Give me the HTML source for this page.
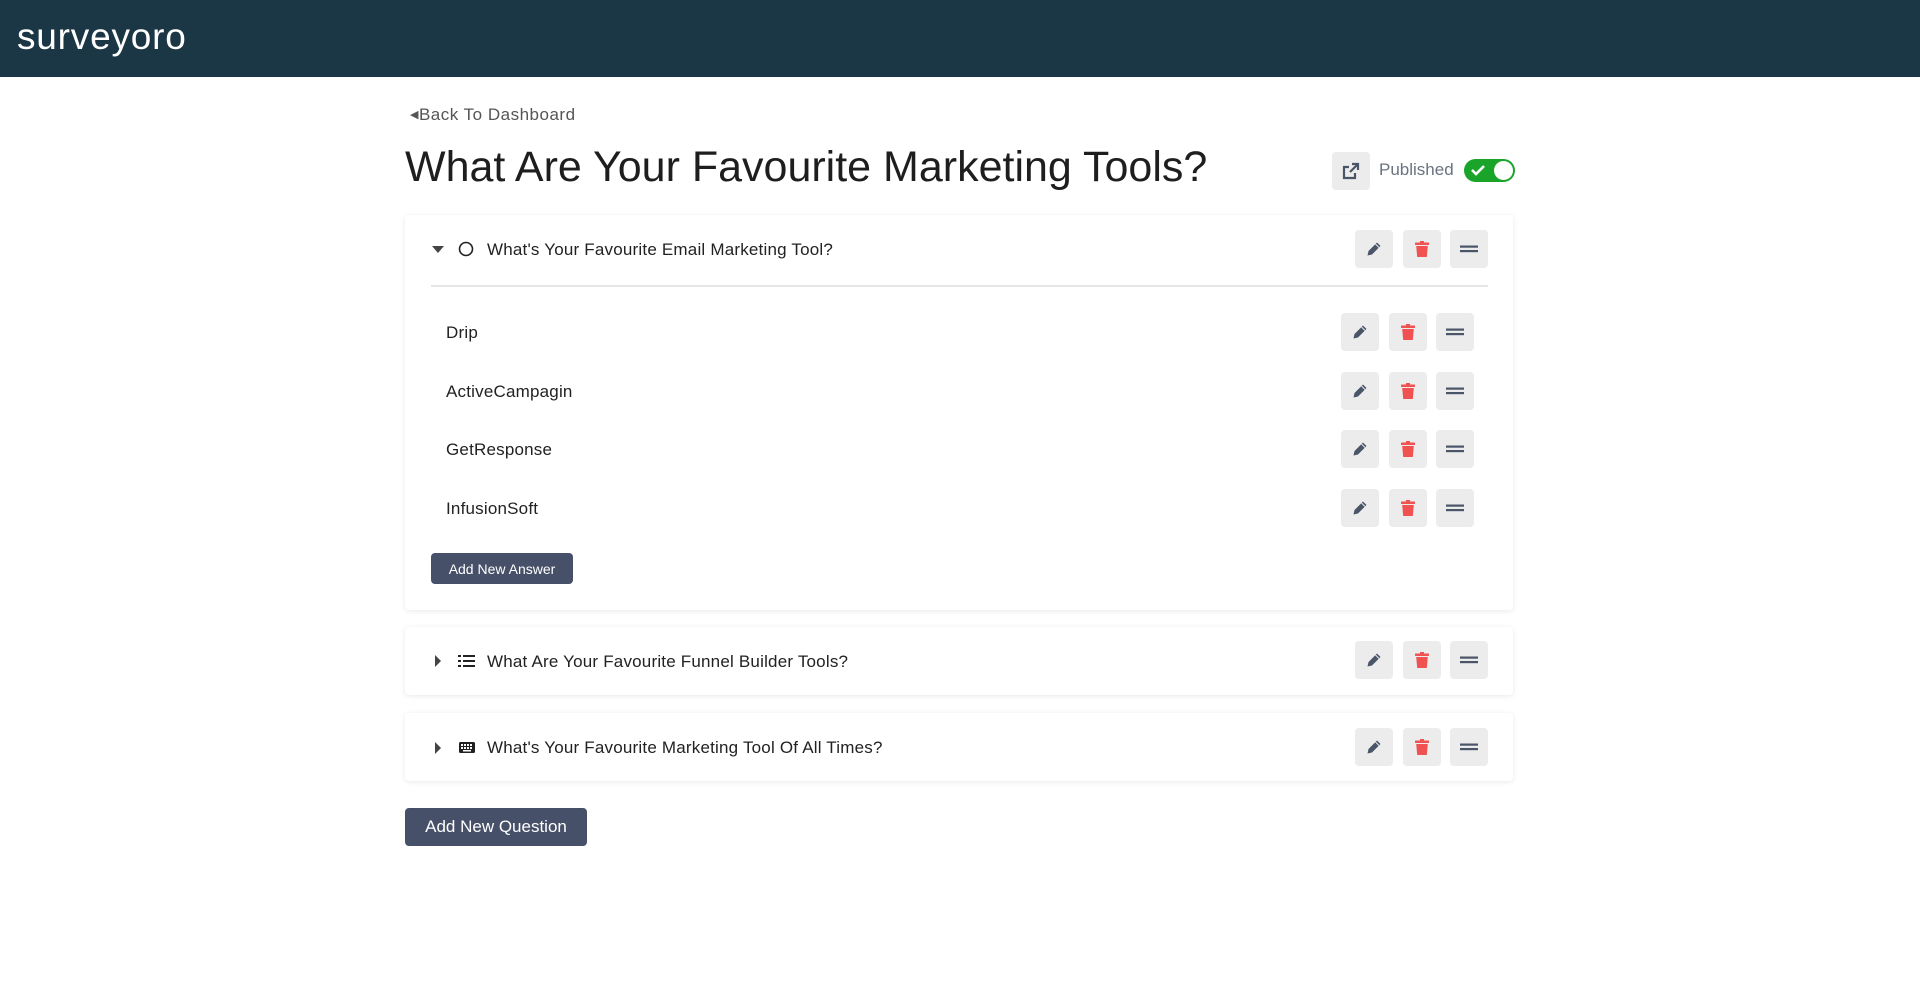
<!DOCTYPE html>
<html><head><meta charset="utf-8"><style>
*{box-sizing:border-box;margin:0;padding:0}
body{width:1920px;height:1007px;background:#fff;font-family:"Liberation Sans",sans-serif;color:#222;position:relative;overflow:hidden}
.hdr{position:absolute;left:0;top:0;width:1920px;height:77px;background:#1b3644}
.logo{position:absolute;left:17px;top:16px;color:#fff;font-size:37px;letter-spacing:0.8px}
.back{position:absolute;left:410px;top:105px;font-size:17px;color:#555;letter-spacing:0.5px}
.title{position:absolute;left:405px;top:143px;font-size:43px;color:#1e1e1e;letter-spacing:0px;white-space:nowrap}
.ext{position:absolute;left:1332px;top:152px;width:38px;height:38px;background:#ececec;border-radius:4px}
.pub{position:absolute;left:1379px;top:160px;font-size:17px;color:#6b7280}
.tog{position:absolute;left:1464px;top:159px;width:51px;height:23px;border-radius:12px;background:#1aa52a}
.tog .k{position:absolute;right:2px;top:2px;width:19px;height:19px;border-radius:50%;background:#fff}
.card{position:absolute;left:405px;width:1108px;background:#fff;border-radius:4px;box-shadow:0 1px 6px rgba(0,0,0,0.09)}
.row{position:absolute;font-size:17px;color:#222;white-space:nowrap;letter-spacing:0.2px}
.btn{position:absolute;width:38px;height:38px;background:#ececec;border-radius:4px;display:flex;align-items:center;justify-content:center}
.primary{position:absolute;background:#475069;color:#fff;border-radius:4px;display:flex;align-items:center;justify-content:center}
</style></head><body>
<div class="hdr"><div class="logo">surveyoro</div></div>
<div class="back"><span style="font-size:11px;position:relative;top:-2px">◀</span>Back To Dashboard</div>
<div class="title">What Are Your Favourite Marketing Tools?</div>
<div class="ext"><svg width="38" height="38" viewBox="0 0 38 38"><path d="M23 21v5h-11v-11h5" fill="none" stroke="#4b5568" stroke-width="2.2"/><path d="M18 20l8-8M20 12h6v6" fill="none" stroke="#4b5568" stroke-width="2.2"/></svg></div>
<div class="pub">Published</div>
<div class="tog"><svg style="position:absolute;left:7px;top:5px" width="14" height="12" viewBox="0 0 14 12"><path d="M1 6l4 4 8-8" fill="none" stroke="#fff" stroke-width="2.6"/></svg><div class="k"></div></div>

<div class="card" style="top:215px;height:395px"></div>
<div class="card" style="top:627px;height:68px"></div>
<div class="card" style="top:713px;height:68px"></div>

<svg style="position:absolute;left:432px;top:246px" width="12" height="8"><path d="M0 0h12L6 7z" fill="#444"/></svg>
<svg style="position:absolute;left:458px;top:241px" width="16" height="16"><circle cx="8" cy="8" r="6.5" fill="none" stroke="#222" stroke-width="1.6"/></svg>
<div class="row" style="left:487px;top:240px">What's Your Favourite Email Marketing Tool?</div>
<div style="position:absolute;left:431px;top:285px;width:1057px;height:2px;background:#e6e6e6"></div>

<div class="row" style="left:446px;top:323px">Drip</div>
<div class="row" style="left:446px;top:382px">ActiveCampagin</div>
<div class="row" style="left:446px;top:440px">GetResponse</div>
<div class="row" style="left:446px;top:499px">InfusionSoft</div>

<div class="primary" style="left:431px;top:553px;width:142px;height:31px;font-size:14px">Add New Answer</div>

<svg style="position:absolute;left:435px;top:655px" width="7" height="12"><path d="M0 0v12l6-6z" fill="#444"/></svg>
<svg style="position:absolute;left:458px;top:654px" width="17" height="14"><g fill="#222"><rect x="0" y="1" width="3" height="2"/><rect x="0" y="6" width="3" height="2"/><rect x="0" y="11" width="3" height="2"/><rect x="5" y="1" width="12" height="2"/><rect x="5" y="6" width="12" height="2"/><rect x="5" y="11" width="12" height="2"/></g></svg>
<div class="row" style="left:487px;top:652px">What Are Your Favourite Funnel Builder Tools?</div>

<svg style="position:absolute;left:435px;top:742px" width="7" height="12"><path d="M0 0v12l6-6z" fill="#444"/></svg>
<svg style="position:absolute;left:459px;top:742px" width="16" height="11"><rect width="16" height="11" rx="1.5" fill="#222"/><g fill="#fff"><rect x="2" y="2" width="2" height="2"/><rect x="5" y="2" width="2" height="2"/><rect x="8" y="2" width="2" height="2"/><rect x="11" y="2" width="2" height="2"/><rect x="2" y="5" width="2" height="2"/><rect x="5" y="5" width="2" height="2"/><rect x="8" y="5" width="2" height="2"/><rect x="11" y="5" width="2" height="2"/><rect x="4" y="8" width="8" height="1.5"/></g></svg>
<div class="row" style="left:487px;top:738px">What's Your Favourite Marketing Tool Of All Times?</div>

<div class="primary" style="left:405px;top:808px;width:182px;height:38px;font-size:17px">Add New Question</div>

<script>
const pen='<svg width="16" height="16" viewBox="0 0 16 16"><path d="M11 1.5l3.5 3.5-8.5 8.5-4.5 1 1-4.5z" fill="#4b5568"/><path d="M9.5 3l3.5 3.5" stroke="#ececec" stroke-width="1"/></svg>';
const trash='<svg width="14" height="16" viewBox="0 0 14 16"><rect x="0" y="1.5" width="14" height="2.5" rx="0.5" fill="#f05252"/><rect x="5" y="0" width="4" height="2" fill="#f05252"/><path d="M1.2 5h11.6l-1 11h-9.6z" fill="#f05252"/></svg>';
const bars='<svg width="18" height="8"><rect y="0.5" width="18" height="2.2" fill="#4b5568"/><rect y="5" width="18" height="2.2" fill="#4b5568"/></svg>';
function set(x,y){[[0,pen],[48,trash],[95,bars]].forEach(([d,ic])=>{const b=document.createElement('div');b.className='btn';b.style.left=(x+d)+'px';b.style.top=(y-19)+'px';b.innerHTML=ic;document.body.appendChild(b);});}
set(1355,249);set(1355,660);set(1355,747);
[332,391,449,508].forEach(y=>set(1341,y));
</script>
</body></html>
